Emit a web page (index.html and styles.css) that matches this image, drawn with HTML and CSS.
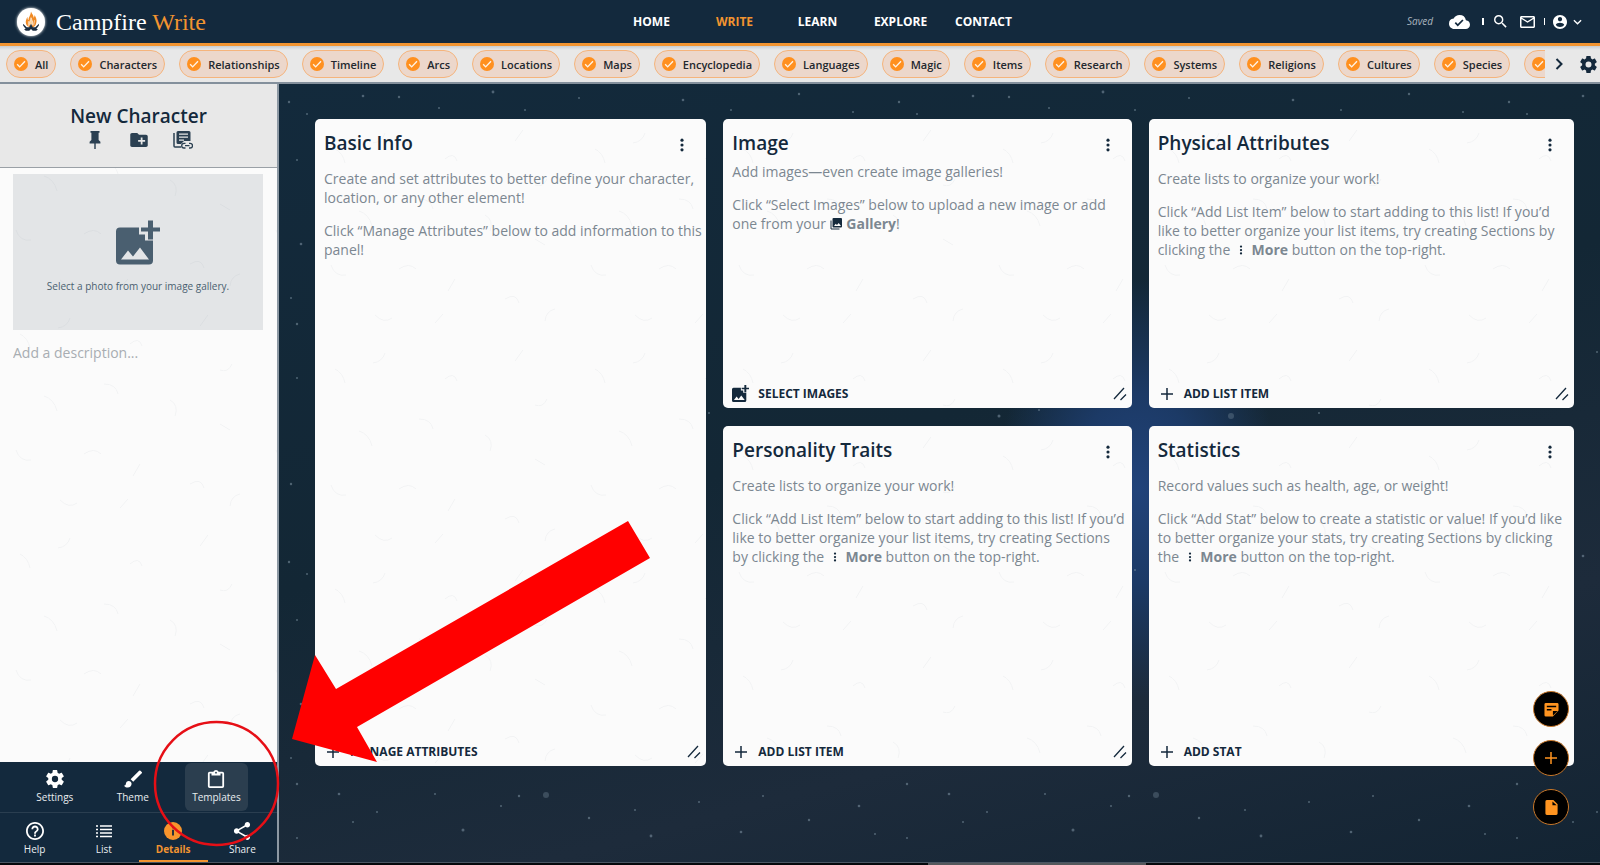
FILE: index.html
```html
<!DOCTYPE html>
<html lang="en">
<head>
<meta charset="utf-8">
<meta name="viewport" content="width=device-width, initial-scale=1">
<title>Campfire Write</title>
<link rel="stylesheet" href="styles.css">
</head>
<body>
<svg class="sprite" aria-hidden="true">
  <symbol id="check" viewBox="2 2 20 20"><circle cx="12" cy="12" r="10" fill="#ff901f"/><path d="M6.5 12.5l3.6 3.6 7.6-8" fill="none" stroke="#fff3e6" stroke-width="2"/></symbol>
  <symbol id="gear" viewBox="2 2 20 20"><path d="M12 15.5A3.5 3.5 0 0 1 8.5 12 3.5 3.5 0 0 1 12 8.5a3.5 3.5 0 0 1 3.5 3.5 3.5 3.5 0 0 1-3.5 3.5m7.43-2.53c.04-.32.07-.64.07-.97 0-.33-.03-.66-.07-1l2.11-1.63c.19-.15.24-.42.12-.64l-2-3.46c-.12-.22-.39-.31-.61-.22l-2.49 1c-.52-.39-1.06-.73-1.69-.98l-.37-2.65A.506.506 0 0 0 14 2h-4c-.25 0-.46.18-.5.42l-.37 2.65c-.63.25-1.17.59-1.69.98l-2.49-1c-.22-.09-.49 0-.61.22l-2 3.46c-.13.22-.07.49.12.64L4.57 11c-.04.34-.07.67-.07 1 0 .33.03.65.07.97l-2.11 1.66c-.19.15-.25.42-.12.64l2 3.46c.12.22.39.3.61.22l2.49-1.01c.52.4 1.06.74 1.69.99l.37 2.65c.04.24.25.42.5.42h4c.25 0 .46-.18.5-.42l.37-2.65c.63-.26 1.17-.59 1.69-.99l2.49 1.01c.22.08.49 0 .61-.22l2-3.46c.12-.22.07-.49-.12-.64l-2.11-1.66Z"/></symbol>
  <symbol id="dots" viewBox="0 0 6 16"><circle cx="3" cy="2.5" r="1.8"/><circle cx="3" cy="8" r="1.8"/><circle cx="3" cy="13.5" r="1.8"/></symbol>
  <symbol id="plus" viewBox="0 0 12 12"><path d="M6 0v12M0 6h12" fill="none" stroke="currentColor" stroke-width="1.5"/></symbol>
  <symbol id="resize" viewBox="0 0 14 14"><path d="M1 12L11 1M7.500 13L13 7.500" fill="none" stroke="currentColor" stroke-width="1.300"/></symbol>
  <symbol id="image-plus" viewBox="0 0 44 44"><path fill-rule="evenodd" d="M4 8h19v7h6v6h8v20q0 4-4 4H4q-4 0-4-4V12q0-4 4-4zM5 40h28L24 28l-7 9-5-6z" transform="translate(0 -1)"/><path d="M32 0h5v7h7v4h-7v8h-5v-8h-7V7h7z"/></symbol>
</svg>

<header class="topbar">
  <a class="brand" href="#">
    <svg class="brand-mark" viewBox="0 0 32 32" aria-hidden="true"><path d="M16 4c1 3 3 4 3 7 1-1 1-2 1-3 2 3 3 6 2 9-1 4-3 5-6 5s-6-2-6-6c0-2 1-4 2-6 0 2 0 3 1 4 0-4 3-6 3-10z" fill="#f08a24"/><path d="M16 11c1 3 2 4 2 7l-2 4-2-4c0-3 2-4 2-7zM13 15v6M20 14l-1 6" fill="#fbd3a0" stroke="#fff" stroke-width=".7"/><path d="M7 18l4 4h3l2-4 2 4h3l4-4v2l-3 4h2l-2 2h-4l-2-2-2 2h-4l-2-2h2l-3-4z" fill="#1b2d40"/></svg>
    <span class="brand-name">Campfire <span class="brand-accent">Write</span></span>
  </a>
  <nav class="main-nav">
    <a href="#">HOME</a><a href="#" class="active">WRITE</a><a href="#">LEARN</a><a href="#">EXPLORE</a><a href="#">CONTACT</a>
  </nav>
  <div class="tools">
    <span class="saved">Saved</span>
    <svg class="cloud" viewBox="0 4 24 16"><path d="M19.350 10.040A7.490 7.490 0 0 0 12 4C9.110 4 6.600 5.640 5.350 8.040A5.994 5.994 0 0 0 0 14c0 3.310 2.690 6 6 6h13c2.760 0 5-2.240 5-5 0-2.640-2.050-4.780-4.650-4.960zM10 17l-3.500-3.500 1.410-1.410L10 14.170 15.180 9l1.410 1.410L10 17z"/></svg>
    <span class="bar"></span>
    <button class="tool search" aria-label="Search"><svg viewBox="3 3 18 18"><path d="M15.500 14h-.79l-.28-.27A6.471 6.471 0 0 0 16 9.500 6.500 6.500 0 1 0 9.500 16c1.610 0 3.090-.59 4.230-1.570l.27.28v.79l5 4.990L20.490 19l-4.990-5zm-6 0C7.010 14 5 11.990 5 9.500S7.010 5 9.500 5 14 7.010 14 9.500 11.990 14 9.500 14z"/></svg></button>
    <button class="tool mail" aria-label="Messages"><svg viewBox="2 4 20 16"><path d="M22 6c0-1.100-.9-2-2-2H4c-1.100 0-2 .9-2 2v12c0 1.100.9 2 2 2h16c1.100 0 2-.9 2-2V6zm-2 0l-8 5-8-5h16zm0 12H4V8l8 5 8-5v10z"/></svg></button>
    <span class="bar thin"></span>
    <button class="tool account" aria-label="Account"><svg viewBox="2 2 20 20"><path d="M12 2C6.480 2 2 6.480 2 12s4.480 10 10 10 10-4.480 10-10S17.520 2 12 2zm0 3c1.660 0 3 1.340 3 3s-1.340 3-3 3-3-1.340-3-3 1.340-3 3-3zm0 14.200c-2.500 0-4.710-1.280-6-3.220.03-1.990 4-3.080 6-3.080 1.990 0 5.970 1.090 6 3.080-1.290 1.940-3.500 3.220-6 3.220z"/></svg><svg class="caret" viewBox="0 0 10 6"><path d="M1 1l4 4 4-4" fill="none" stroke="currentColor" stroke-width="1.500"/></svg></button>
  </div>
</header>

<div class="filters">
  <div class="chips">
    <button class="chip"><svg><use href="#check"/></svg>All</button>
    <button class="chip"><svg><use href="#check"/></svg>Characters</button>
    <button class="chip"><svg><use href="#check"/></svg>Relationships</button>
    <button class="chip"><svg><use href="#check"/></svg>Timeline</button>
    <button class="chip"><svg><use href="#check"/></svg>Arcs</button>
    <button class="chip"><svg><use href="#check"/></svg>Locations</button>
    <button class="chip"><svg><use href="#check"/></svg>Maps</button>
    <button class="chip"><svg><use href="#check"/></svg>Encyclopedia</button>
    <button class="chip"><svg><use href="#check"/></svg>Languages</button>
    <button class="chip"><svg><use href="#check"/></svg>Magic</button>
    <button class="chip"><svg><use href="#check"/></svg>Items</button>
    <button class="chip"><svg><use href="#check"/></svg>Research</button>
    <button class="chip"><svg><use href="#check"/></svg>Systems</button>
    <button class="chip"><svg><use href="#check"/></svg>Religions</button>
    <button class="chip"><svg><use href="#check"/></svg>Cultures</button>
    <button class="chip"><svg><use href="#check"/></svg>Species</button>
    <button class="chip" aria-label="Philosophies"><svg><use href="#check"/></svg><span class="chip-space"></span></button>
  </div>
  <button class="next" aria-label="Scroll right"><svg viewBox="0 0 8 12"><path d="M1.500 1l5 5-5 5" fill="none" stroke="currentColor" stroke-width="2"/></svg></button>
  <button class="prefs" aria-label="Preferences"><svg><use href="#gear"/></svg></button>
</div>

<div class="workspace">
  <aside class="sidebar paper">
    <div class="side-head">
      <h1>New Character</h1>
      <div class="side-actions">
        <button aria-label="Pin"><svg width="12" height="18" viewBox="6 2 12 20"><path d="M16 12V4h1V2H7v2h1v8l-2 2v2h5.200v6h1.600v-6H18v-2l-2-2z"/></svg></button>
        <button aria-label="Add to folder"><svg width="18" height="14" viewBox="2 4 20 16"><path d="M20 6h-8l-2-2H4c-1.110 0-1.990.89-1.990 2L2 18c0 1.110.89 2 2 2h16c1.110 0 2-.9 2-2V8c0-1.110-.89-2-2-2zm-1 8h-3v3h-2v-3h-3v-2h3V9h2v3h3v2z"/></svg></button>
        <button aria-label="Linked notes"><svg width="20" height="18" viewBox="0 0 20 18"><path d="M1 2v13q0 1 1 1h6" fill="none" stroke="currentColor" stroke-width="1.500"/><path fill-rule="evenodd" d="M5 0h11q1.500 0 1.500 1.500V10H11l-3 3H5q-1.500 0-1.500-1.500v-10Q3.500 0 5 0zM6 2.500v1.200h9V2.500zm0 3v1.200h9V5.500zm0 3v1.200h5V8.500z"/><path d="M12.500 17H11a2.300 2.300 0 0 1 0-4.600h1.500M16 12.400h1.200a2.300 2.300 0 0 1 0 4.600H16M12 14.700h4.500" fill="none" stroke="currentColor" stroke-width="1.300"/></svg></button>
      </div>
    </div>
    <div class="side-body">
      <button class="photo"><svg><use href="#image-plus"/></svg><span>Select a photo from your image gallery.</span></button>
      <textarea class="description" aria-label="Description" placeholder="Add a description..."></textarea>
    </div>
    <div class="side-nav">
      <div class="nav-row upper">
        <button><svg><use href="#gear"/></svg>Settings</button>
        <button><svg viewBox="2 3 19 18"><path d="M7 14c-1.660 0-3 1.340-3 3 0 1.310-1.160 2-2 2 .92 1.220 2.490 2 4 2 2.210 0 4-1.790 4-4 0-1.660-1.340-3-3-3zm13.710-9.370l-1.340-1.340a.996.996 0 0 0-1.410 0L9 12.250 11.750 15l8.960-8.960a.996.996 0 0 0 0-1.410z"/></svg>Theme</button>
        <button class="hovered"><svg viewBox="2 1 20 20"><path d="M19 3h-4.180C14.400 1.840 13.300 1 12 1c-1.300 0-2.400.84-2.820 2H5a2 2 0 0 0-2 2v14a2 2 0 0 0 2 2h14a2 2 0 0 0 2-2V5a2 2 0 0 0-2-2m-7 0a1 1 0 0 1 1 1 1 1 0 0 1-1 1 1 1 0 0 1-1-1 1 1 0 0 1 1-1M7 7h10V5h2v14H5V5h2v2Z"/></svg>Templates</button>
      </div>
      <div class="nav-row lower">
        <button><svg viewBox="2 2 20 20"><path d="M11 18h2v-2h-2v2zm1-16C6.480 2 2 6.480 2 12s4.480 10 10 10 10-4.480 10-10S17.520 2 12 2zm0 18c-4.410 0-8-3.590-8-8s3.590-8 8-8 8 3.590 8 8-3.590 8-8 8zm0-14c-2.210 0-4 1.790-4 4h2c0-1.100.9-2 2-2s2 .9 2 2c0 2-3 1.750-3 5h2c0-2.250 3-2.500 3-5 0-2.210-1.790-4-4-4z"/></svg>Help</button>
        <button><svg viewBox="0 0 18 18"><path d="M1 4h2M1 7.500h2M1 11h2M1 14.500h2M5 4h12M5 7.500h12M5 11h12M5 14.500h12" stroke="currentColor" stroke-width="1.700" fill="none"/></svg>List</button>
        <button class="current"><svg viewBox="2 2 20 20"><circle cx="12" cy="12" r="10"/><path d="M11 10.500h2V17h-2zM11 7h2v2h-2z" fill="#13293d"/></svg>Details</button>
        <button><svg viewBox="2 2 20 20"><path d="M18 16.080c-.76 0-1.440.3-1.960.77L8.910 12.700c.05-.23.09-.46.09-.7s-.04-.47-.09-.7l7.050-4.110c.54.5 1.250.81 2.040.81 1.660 0 3-1.340 3-3s-1.340-3-3-3-3 1.340-3 3c0 .24.04.47.09.7L8.040 9.810C7.500 9.310 6.790 9 6 9c-1.660 0-3 1.340-3 3s1.340 3 3 3c.79 0 1.500-.31 2.040-.81l7.120 4.160c-.05.21-.08.43-.08.65 0 1.610 1.310 2.920 2.920 2.920s2.920-1.310 2.920-2.920-1.310-2.920-2.920-2.920z"/></svg>Share</button>
      </div>
    </div>
  </aside>

  <main class="board">
    <section class="card tall paper">
      <div class="card-head"><h2>Basic Info</h2><button class="more" aria-label="More"><svg><use href="#dots"/></svg></button></div>
      <div class="card-body"><p>Create and set attributes to better define your character, location, or any other element!</p><p>Click “Manage Attributes” below to add information to this panel!</p></div>
      <div class="card-foot"><button class="action"><svg><use href="#plus"/></svg>MANAGE ATTRIBUTES</button><svg class="grip"><use href="#resize"/></svg></div>
    </section>
    <section class="card paper">
      <div class="card-head"><h2>Image</h2><button class="more" aria-label="More"><svg><use href="#dots"/></svg></button></div>
      <div class="card-body compact"><p>Add images—even create image galleries!</p><p>Click “Select Images” below to upload a new image or add one from your <svg class="inline-gallery" viewBox="0 0 12 12"><path d="M1 2.500V11h8.500" fill="none" stroke="currentColor"/><path fill-rule="evenodd" d="M3.500 0h7.500q1 0 1 1v7.500q0 1-1 1H3.500q-1 0-1-1V1q0-1 1-1zM4 8h7L8.700 5 7 7 5.700 5.800z"/></svg> <b>Gallery</b>!</p></div>
      <div class="card-foot"><button class="action picture"><svg><use href="#image-plus"/></svg>SELECT IMAGES</button><svg class="grip"><use href="#resize"/></svg></div>
    </section>
    <section class="card paper">
      <div class="card-head"><h2>Physical Attributes</h2><button class="more" aria-label="More"><svg><use href="#dots"/></svg></button></div>
      <div class="card-body"><p>Create lists to organize your work!</p><p>Click “Add List Item” below to start adding to this list! If you’d like to better organize your list items, try creating Sections by clicking the <svg class="inline-dots"><use href="#dots"/></svg> <b>More</b> button on the top-right.</p></div>
      <div class="card-foot"><button class="action"><svg><use href="#plus"/></svg>ADD LIST ITEM</button><svg class="grip"><use href="#resize"/></svg></div>
    </section>
    <section class="card paper">
      <div class="card-head"><h2>Personality Traits</h2><button class="more" aria-label="More"><svg><use href="#dots"/></svg></button></div>
      <div class="card-body"><p>Create lists to organize your work!</p><p>Click “Add List Item” below to start adding to this list! If you’d like to better organize your list items, try creating Sections by clicking the <svg class="inline-dots"><use href="#dots"/></svg> <b>More</b> button on the top-right.</p></div>
      <div class="card-foot"><button class="action"><svg><use href="#plus"/></svg>ADD LIST ITEM</button><svg class="grip"><use href="#resize"/></svg></div>
    </section>
    <section class="card paper">
      <div class="card-head"><h2>Statistics</h2><button class="more" aria-label="More"><svg><use href="#dots"/></svg></button></div>
      <div class="card-body"><p>Record values such as health, age, or weight!</p><p>Click “Add Stat” below to create a statistic or value! If you’d like to better organize your stats, try creating Sections by clicking the <svg class="inline-dots"><use href="#dots"/></svg> <b>More</b> button on the top-right.</p></div>
      <div class="card-foot"><button class="action"><svg><use href="#plus"/></svg>ADD STAT</button></div>
    </section>
  </main>
</div>
<div class="dock"><span class="dock-edge"></span></div>

<div class="fabs">
  <button aria-label="Notes"><svg viewBox="0 0 16 16"><path fill-rule="evenodd" d="M2 1h12q1.500 0 1.500 1.500V9L9.500 15.500H2Q.5 15.500.5 14V2.500Q.5 1 2 1zM3 4v1.500h10V4zm0 3.500V9h5V7.500zM9.500 9.500v5l5-5z"/></svg></button>
  <button aria-label="Add"><svg class="fab-plus"><use href="#plus"/></svg></button>
  <button aria-label="New page"><svg viewBox="0 0 16 16"><path fill-rule="evenodd" d="M3.500 0H10l4.500 4.500v10q0 1.500-1.500 1.500H3Q1.500 16 1.500 14.500v-13Q1.500 0 3.500 0zM9 1.500v4h4.500z"/></svg></button>
</div>

<svg class="annotation" width="700" height="865" viewBox="0 0 700 865" aria-hidden="true">
  <path d="M628 521L650 558L357 727L377 762L292 739L315 655L336 689Z" fill="#f00"/>
  <circle cx="216.500" cy="783.500" r="61.500" fill="none" stroke="#e60f16" stroke-width="2.500"/>
</svg>
</body>
</html>
```

FILE: styles.css
```css
:root {
  --navy: #13293d;
  --ink: #14293c;
  --muted: #7c8791;
  --orange: #f29430;
}

* { box-sizing: border-box; }

body {
  margin: 0;
  height: 100vh;
  display: flex;
  flex-direction: column;
  overflow: hidden;
  background: #05080c;
  color: var(--ink);
  font-family: "Open Sans", "Noto Sans", sans-serif;
  font-size: 14px;
  line-height: 19px;
}

button {
  margin: 0;
  padding: 0;
  border: 0;
  background: none;
  color: inherit;
  font: inherit;
  cursor: pointer;
}

svg { fill: currentColor; flex: none; display: block; }
h1, h2, p { margin: 0; }
a { color: inherit; text-decoration: none; }
.sprite { display: none; }

/* top bar */
.topbar {
  display: grid;
  grid-template-columns: 1fr auto 1fr;
  align-items: center;
  height: 46px;
  padding: 0 18px 0 17px;
  border-bottom: 3px solid var(--orange);
  background: var(--navy);
  color: #fff;
  flex: none;
}
.brand { display: flex; align-items: center; gap: 11px; }
.brand-mark {
  width: 28px;
  height: 28px;
  border-radius: 50%;
  background: #fff;
  box-shadow: 0 0 3px #fff;
}
.brand-name {
  font-family: "Liberation Serif", serif;
  font-size: 24px;
  line-height: 28px;
}
.brand-accent { color: var(--orange); }
.main-nav { display: flex; margin-left: 36px; }
.main-nav a {
  width: 83px;
  text-align: center;
  font-size: 12px;
  font-weight: 700;
}
.main-nav .active { color: var(--orange); }
.tools {
  display: flex;
  justify-content: flex-end;
  align-items: center;
}
.saved { margin-right: 16px; color: #aab4be; font-size: 10px; font-style: italic; }
.cloud { width: 21px; height: 14px; }
.bar { width: 2px; height: 7px; margin: 0 10px 0 12px; background: #fff; }
.bar.thin { width: 1px; margin: 0 8px 0 9px; }
.tool { display: flex; align-items: center; gap: 6px; }
.search svg { width: 13px; height: 13px; }
.mail { margin-left: 13px; }
.mail svg { width: 15px; height: 12px; }
.account svg { width: 14px; height: 14px; }
.account .caret { width: 9px; height: 6px; }

/* filter strip */
.filters {
  display: flex;
  align-items: center;
  height: 38px;
  padding: 0 3px 0 6px;
  border-bottom: 2px solid #84909c;
  background: linear-gradient(#c9cdd1, #e8e8e8 4px);
  flex: none;
}
.chips { display: flex; flex: 1; gap: 14px; overflow: hidden; }
.chip {
  display: flex;
  align-items: center;
  gap: 7px;
  height: 28px;
  padding: 0 7px;
  border: 1px solid #f5b47c;
  border-radius: 14px;
  background: #ecd7cb;
  color: #23282e;
  font-size: 11px;
  font-weight: 600;
  flex: none;
}
.chip svg { width: 14px; height: 14px; }
.chip-space { width: 70px; }
.next { margin-left: 10px; }
.next svg { width: 8px; height: 12px; }
.prefs { margin-left: 17px; }
.prefs svg { width: 17px; height: 17px; }

/* shared surfaces */
.paper {
  background-color: #fbfbfb;
  background-image: url("data:image/svg+xml,%3Csvg xmlns='http://www.w3.org/2000/svg' width='260' height='220' fill='none' stroke='%23f2f3f4' stroke-width='1'%3E%3Cpath d='M20 30q8 4 10 14M70 14q-3 9-12 10M130 40q9-8 12 2M200 22l8-11M232 60q-4 9-12 6M44 92q10 3 13 15M104 80q12 0 14 10M170 96q9 5 5 16M220 120l10 6M16 146q4 12 15 10M84 150q10-7 17 0M140 160l-7 12M190 180q11-7 14 4M60 196q9 9 17 3M120 204l8-9M240 190q-9 2-10 12'/%3E%3C/svg%3E");
}

.workspace {
  display: flex;
  flex: 1;
  min-height: 0;
  border-bottom: 1px solid #4a5663;
}
.dock { height: 2px; padding-left: 58%; flex: none; }
.dock-edge { display: block; width: 218px; height: 2px; background: #55585c; }

/* sidebar */
.sidebar {
  display: flex;
  flex-direction: column;
  width: 279px;
  border-right: 2px solid #8c98a3;
  flex: none;
}
.side-head {
  display: flex;
  flex-direction: column;
  align-items: center;
  gap: 1px;
  height: 84px;
  padding-top: 19px;
  border-bottom: 1px solid #9aa0a6;
  background: #e8e8e8;
}
.side-head h1 { font-size: 19px; line-height: 27px; font-weight: 600; }
.side-actions { display: flex; align-items: center; gap: 24px; color: #2b4052; }
.side-actions button { display: grid; place-items: center; width: 20px; }
.side-body {
  display: flex;
  flex-direction: column;
  flex: 1;
  gap: 13px;
  padding: 6px 14px 14px 13px;
}
.photo {
  display: flex;
  flex-direction: column;
  align-items: center;
  gap: 12px;
  height: 156px;
  padding-top: 46px;
  background: #24384b1c;
  color: #4a5f70;
  font-size: 10px;
}
.photo svg { width: 44px; height: 45px; }
.description {
  flex: 1;
  padding: 0;
  border: 0;
  background: none;
  font: inherit;
  resize: none;
  outline: 0;
}
.description::placeholder { color: #a8adb2; }
.side-nav { background: var(--navy); color: #e9edf0; }
.nav-row { display: flex; height: 49px; }
.nav-row button {
  display: flex;
  flex-direction: column;
  align-items: center;
  justify-content: center;
  font-size: 10px;
  line-height: 14px;
  gap: 2px;
}
.nav-row svg { width: 18px; height: 18px; color: #fff; }
.upper {
  justify-content: space-evenly;
  height: 51px;
  padding: 1px 0;
  border-bottom: 1px solid #2a3e50;
}
.upper button { padding: 0 7px; border-radius: 6px; }
.upper .hovered { background: #2b3e4f; }
.lower button { flex: 1; padding-top: 4px; border-bottom: 2px solid transparent; }
.lower .current { border-color: var(--orange); color: var(--orange); font-weight: 700; }
.lower .current svg { color: #f8942c; }

/* board */
.board {
  display: grid;
  flex: 1;
  grid-template-columns: 391fr 408fr 425fr;
  grid-template-rows: 289fr 340fr;
  gap: 18px 17px;
  padding: 35px 26px 96px 36px;
  background:
    url("data:image/svg+xml,%3Csvg xmlns='http://www.w3.org/2000/svg' width='610' height='460' fill='%237f93a3'%3E%3Cg opacity='.55'%3E%3Ccircle cx='10' cy='18' r='1.200'/%3E%3Ccircle cx='28' cy='30' r='1'/%3E%3Ccircle cx='84' cy='12' r='1.300'/%3E%3Ccircle cx='120' cy='13' r='1.200'/%3E%3Ccircle cx='18' cy='76' r='1'/%3E%3Ccircle cx='160' cy='24' r='1'/%3E%3Ccircle cx='214' cy='8' r='1.400'/%3E%3Ccircle cx='246' cy='26' r='1'/%3E%3Ccircle cx='300' cy='14' r='1'/%3E%3Ccircle cx='404' cy='16' r='1.300'/%3E%3Ccircle cx='452' cy='26' r='1'/%3E%3Ccircle cx='520' cy='10' r='1.200'/%3E%3Ccircle cx='574' cy='28' r='1'/%3E%3Ccircle cx='22' cy='160' r='1.300'/%3E%3Ccircle cx='12' cy='214' r='1'/%3E%3Ccircle cx='18' cy='294' r='1'/%3E%3Ccircle cx='110' cy='332' r='1.500'/%3E%3Ccircle cx='150' cy='326' r='1'/%3E%3Ccircle cx='342' cy='332' r='3' opacity='.6'/%3E%3Ccircle cx='430' cy='329' r='1'/%3E%3Ccircle cx='12' cy='400' r='1.200'/%3E%3Ccircle cx='18' cy='240' r='1.200'/%3E%3Ccircle cx='60' cy='250' r='1.300'/%3E%3Ccircle cx='74' cy='278' r='1'/%3E%3Ccircle cx='98' cy='268' r='1'/%3E%3Ccircle cx='156' cy='250' r='1'/%3E%3Ccircle cx='184' cy='286' r='1.500'/%3E%3Ccircle cx='222' cy='262' r='1'/%3E%3Ccircle cx='240' cy='252' r='1.200'/%3E%3Ccircle cx='267' cy='251' r='3' opacity='.6'/%3E%3Ccircle cx='310' cy='274' r='1.200'/%3E%3Ccircle cx='356' cy='266' r='1'/%3E%3Ccircle cx='372' cy='292' r='1.400'/%3E%3Ccircle cx='420' cy='258' r='1'/%3E%3Ccircle cx='462' cy='288' r='1.300'/%3E%3Ccircle cx='484' cy='252' r='1'/%3E%3Ccircle cx='530' cy='276' r='1.200'/%3E%3Ccircle cx='580' cy='262' r='1.300'/%3E%3Ccircle cx='596' cy='290' r='1'/%3E%3C/g%3E%3C/svg%3E"),
    radial-gradient(ellipse 140px 210px at 65% 52%, #21437a, #1c3a66 45%, transparent),
    linear-gradient(165deg, #132a3c, #132735 45%, #1d2b3b 75%, #132433);
}
.card {
  display: flex;
  flex-direction: column;
  min-width: 0;
  padding: 10px 9px 5px;
  border-radius: 5px;
}
.tall { grid-row: span 2; }
.card-head { display: flex; justify-content: space-between; align-items: center; }
.card-head h2 { font-size: 19px; line-height: 28px; font-weight: 600; }
.more { padding: 4px 12px 0; }
.more svg { width: 6px; height: 14px; }
.card-body {
  display: flex;
  flex-direction: column;
  flex: 1;
  gap: 14px;
  margin-right: -6px;
  padding-top: 12px;
  color: var(--muted);
}
.compact { padding-top: 5px; }
.inline-dots { display: inline-block; width: 6px; height: 10px; margin: 0 4px; color: var(--ink); }
.inline-gallery { display: inline-block; width: 12px; height: 12px; margin-right: 1px; color: var(--ink); vertical-align: -1px; }
.card-foot { display: flex; justify-content: space-between; align-items: center; }
.action {
  display: flex;
  align-items: center;
  gap: 11px;
  padding-left: 3px;
  font-size: 12px;
  font-weight: 700;
}
.action svg { width: 12px; height: 12px; }
.picture { gap: 9px; padding-left: 0; }
.picture svg { width: 17px; height: 17px; }
.card-foot .grip { width: 14px; height: 14px; margin-right: -4px; }

/* floating buttons */
.fabs {
  position: fixed;
  right: 31px;
  bottom: 40px;
  display: flex;
  flex-direction: column;
  gap: 13px;
}
.fabs button {
  display: grid;
  place-items: center;
  width: 36px;
  height: 36px;
  border: 1px solid #c9782a;
  border-radius: 50%;
  background: #000;
  color: #ff9420;
}
.fabs svg { width: 15px; height: 15px; }
.fabs .fab-plus { width: 12px; height: 12px; }

.annotation { position: absolute; top: 0; left: 0; pointer-events: none; }
```
